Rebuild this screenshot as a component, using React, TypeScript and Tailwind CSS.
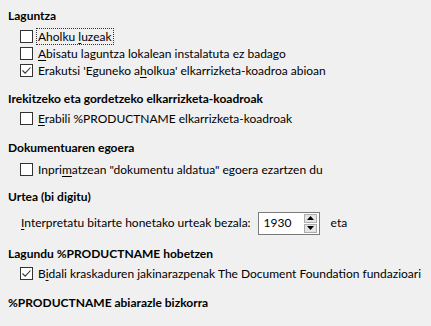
import React from "react";

function U({ children }: { children: React.ReactNode }) {
  return <span className="underline underline-offset-2">{children}</span>;
}

function Box({ checked }: { checked?: boolean }) {
  return (
    <span className="flex-none w-[13px] h-[13px] border border-[#333333] bg-white flex items-center justify-center">
      {checked && (
        <svg width="11" height="11" viewBox="0 0 11 11">
          <path d="M1.5 5.5 L4.2 8.2 L9.5 2.5" fill="none" stroke="#333" strokeWidth="1.1" />
        </svg>
      )}
    </span>
  );
}

function Check({ checked, focus, children }: { checked?: boolean; focus?: boolean; children: React.ReactNode }) {
  return (
    <div className="flex items-center h-[17px] pl-[20px] whitespace-nowrap">
      <Box checked={checked} />
      <span className={"ml-[4px] px-[1px] leading-[15px] " + (focus ? "outline outline-1 outline-dotted outline-[#333]" : "")}>
        {children}
      </span>
    </div>
  );
}

function Head({ children, className }: { children: React.ReactNode; className?: string }) {
  return <div className={"h-5 leading-5 pl-2 font-bold whitespace-nowrap " + (className ?? "")}>{children}</div>;
}

export default function App() {
  return (
    <div
      className="w-[431px] h-[326px] bg-[#f0f0f0] text-black text-[12px] overflow-hidden pt-[6px]"
      style={{ fontFamily: "Lato, 'Noto Sans', sans-serif" }}
    >
      <Head>Laguntza</Head>
      <div className="mt-[2px]">
        <Check focus>
          Aholku <U>l</U>uzeak
        </Check>
        <Check>
          <U>A</U>bisatu laguntza lokalean instalatuta ez badago
        </Check>
        <Check checked>
          Erakutsi 'Eguneko a<U>h</U>olkua' elkarrizketa-koadroa abioan
        </Check>
      </div>

      <Head className="mt-[10px]">Irekitzeko eta gordetzeko elkarrizketa-koadroak</Head>
      <div className="mt-[1px]">
        <Check>
          <U>E</U>rabili %PRODUCTNAME elkarrizketa-koadroak
        </Check>
      </div>

      <Head className="mt-[11px]">Dokumentuaren egoera</Head>
      <div className="mt-[3px]">
        <Check>
          Inpri<U>m</U>atzean "dokumentu aldatua" egoera ezartzen du
        </Check>
      </div>

      <Head className="mt-[9px]">Urtea (bi digitu)</Head>
      <div className="mt-[4px] flex items-center h-[24px] pl-[21px] whitespace-nowrap">
        <span>
          <U>I</U>nterpretatu bitarte honetako urteak bezala:
        </span>
        <div className="ml-[7px] w-[62px] h-[23px] border border-[#7a7a7a] bg-white flex items-center pl-[5px]">
          <span className="flex-1">1930</span>
          <div className="flex flex-col mr-[2px] gap-[1px]">
            <div className="w-[13px] h-[9px] bg-[#e5e5e5] border border-[#adadad] flex items-center justify-center">
              <svg width="7" height="4" viewBox="0 0 7 4"><path d="M0 4 L3.5 0 L7 4 Z" fill="#000" /></svg>
            </div>
            <div className="w-[13px] h-[9px] bg-[#e5e5e5] border border-[#adadad] flex items-center justify-center">
              <svg width="7" height="4" viewBox="0 0 7 4"><path d="M0 0 L3.5 4 L7 0 Z" fill="#000" /></svg>
            </div>
          </div>
        </div>
        <span className="ml-[11px]">eta</span>
      </div>

      <Head className="mt-[9px]">Lagundu %PRODUCTNAME hobetzen</Head>
      <div className="mt-[1px]">
        <Check checked>
          B<U>i</U>dali kraskaduren jakinarazpenak The Document Foundation fundazioari
        </Check>
      </div>

      <Head className="mt-[11px]">%PRODUCTNAME abiarazle bizkorra</Head>
    </div>
  );
}
